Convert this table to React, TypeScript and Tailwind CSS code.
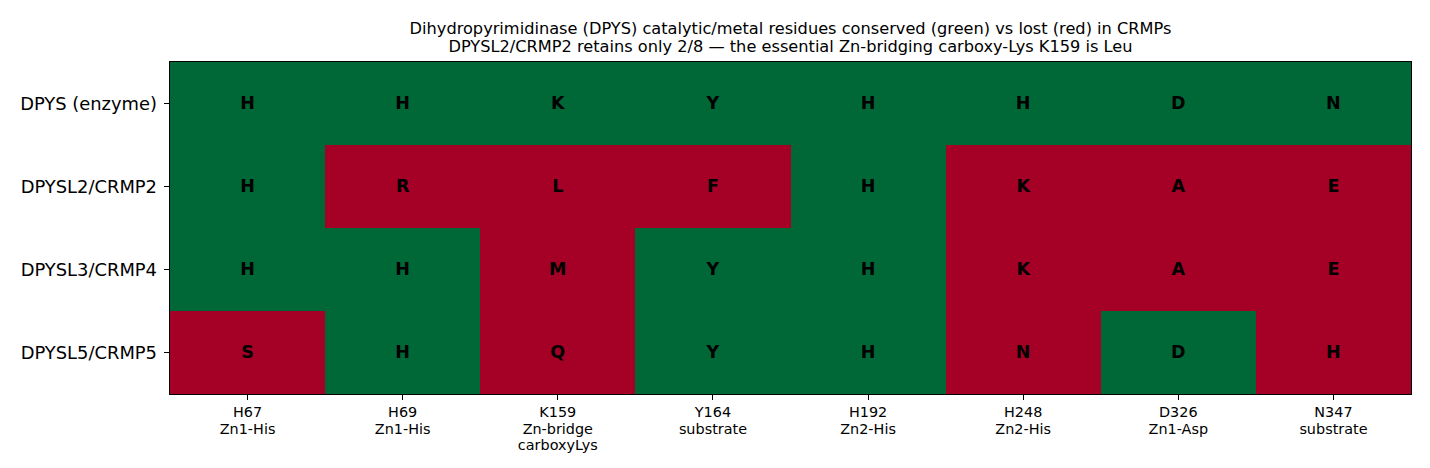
const rows = [
  { label: "DPYS (enzyme)", cells: "HHKYHHDN", keep: "11111111" },
  { label: "DPYSL2/CRMP2", cells: "HRLFHKAE", keep: "10001000" },
  { label: "DPYSL3/CRMP4", cells: "HHMYHKAE", keep: "11011000" },
  { label: "DPYSL5/CRMP5", cells: "SHQYHNDH", keep: "01011010" },
];

const sites = [
  ["H67", "Zn1-His"],
  ["H69", "Zn1-His"],
  ["K159", "Zn-bridge", "carboxyLys"],
  ["Y164", "substrate"],
  ["H192", "Zn2-His"],
  ["H248", "Zn2-His"],
  ["D326", "Zn1-Asp"],
  ["N347", "substrate"],
];

export default function App() {
  return (
    <div className="flex h-[468px] w-[1430px] flex-col bg-white font-['DejaVu_Sans',sans-serif] text-black">
      {/* Title */}
      <div className="flex pt-[20px]">
        <div className="w-[169px] shrink-0" />
        <div className="w-[1243px] text-center text-[16.2px] leading-[17.5px]">
          <p>Dihydropyrimidinase (DPYS) catalytic/metal residues conserved (green) vs lost (red) in CRMPs</p>
          <p>DPYSL2/CRMP2 retains only 2/8 — the essential Zn-bridging carboxy-Lys K159 is Leu</p>
        </div>
      </div>

      {/* Heatmap */}
      <div className="mt-[6px] flex">
        <div className="flex w-[169px] shrink-0 flex-col pt-px">
          {rows.map((r) => (
            <div key={r.label} className="flex h-[83px] items-center justify-end gap-[7px]">
              <span className="text-[17.9px] leading-none">{r.label}</span>
              <span className="h-px w-[5px] bg-black" />
            </div>
          ))}
        </div>
        <div className="w-[1243px] border border-black">
          {rows.map((r) => (
            <div key={r.label} className="grid h-[83px] grid-cols-8">
              {r.cells.split("").map((c, i) => (
                <div
                  key={i}
                  className={
                    "flex items-center justify-center text-[17.5px] font-bold " +
                    (r.keep[i] === "1" ? "bg-[#006837]" : "bg-[#a50026]")
                  }
                >
                  {c}
                </div>
              ))}
            </div>
          ))}
        </div>
      </div>

      {/* X axis labels */}
      <div className="flex">
        <div className="w-[170px] shrink-0" />
        <div className="grid w-[1241px] grid-cols-8">
          {sites.map((s) => (
            <div key={s[0]} className="flex flex-col items-center">
              <span className="h-[5px] w-px bg-black" />
              <div className="mt-[4px] text-center text-[14.4px] leading-[16.5px]">
                {s.map((l) => (
                  <p key={l}>{l}</p>
                ))}
              </div>
            </div>
          ))}
        </div>
      </div>
    </div>
  );
}
